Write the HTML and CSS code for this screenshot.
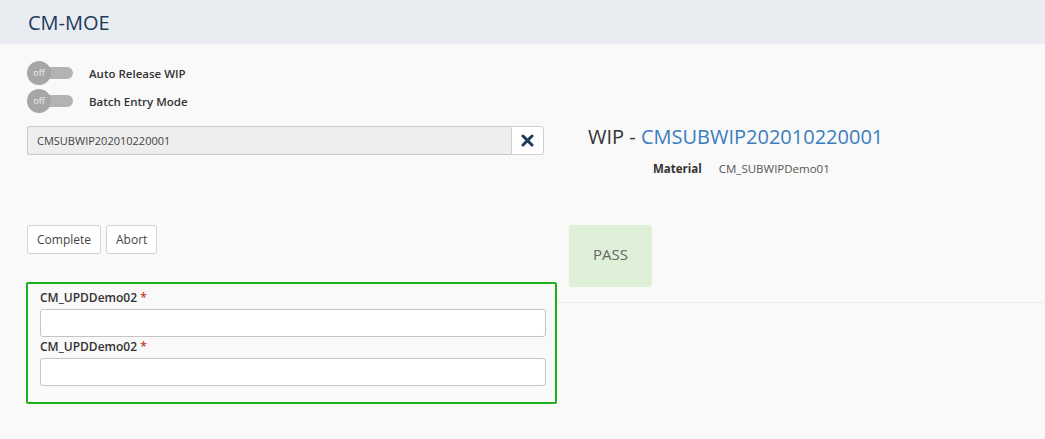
FILE: index.html
```html
<!DOCTYPE html>
<html>
<head>
<meta charset="utf-8">
<link rel="stylesheet" href="styles.css">
</head>
<body>
<header class="page-header">
  <h1 class="page-title">CM-MOE</h1>
</header>
<main class="content">
  <section class="left-col">
    <div class="toggles">
      <div class="toggle-row">
        <span class="switch"><span class="knob">off</span></span>
        <span class="toggle-label">Auto Release WIP</span>
      </div>
      <div class="toggle-row">
        <span class="switch"><span class="knob">off</span></span>
        <span class="toggle-label">Batch Entry Mode</span>
      </div>
    </div>
    <div class="input-group">
      <input class="wip-input" type="text" value="CMSUBWIP202010220001" readonly>
      <button class="clear-btn" type="button" aria-label="Clear">
        <svg width="13" height="13" viewBox="0 0 13 13"><path d="M2 2 L11 11 M11 2 L2 11" stroke="#1f3a5c" stroke-width="3" stroke-linecap="round"/></svg>
      </button>
    </div>
    <div class="actions">
      <button class="btn" type="button">Complete</button>
      <button class="btn" type="button">Abort</button>
    </div>
    <div class="data-box">
      <label class="field-label">CM_UPDDemo02 <span class="req">*</span></label>
      <input class="field-input" type="text">
      <label class="field-label">CM_UPDDemo02 <span class="req">*</span></label>
      <input class="field-input" type="text">
    </div>
  </section>
  <section class="right-col">
    <div class="wip-panel">
      <h2 class="wip-title">WIP - <span class="wip-id">CMSUBWIP202010220001</span></h2>
      <div class="meta"><span class="meta-key">Material</span><span class="meta-val">CM_SUBWIPDemo01</span></div>
      <div class="pass">PASS</div>
    </div>
  </section>
</main>
</body>
</html>
```

FILE: styles.css
```css
* { box-sizing: border-box; }
html, body { margin: 0; padding: 0; }
body {
  font-family: "Open Sans", "Liberation Sans", sans-serif;
  background: #f9f9f9;
  color: #333;
  width: 1045px;
  height: 439px;
  overflow: hidden;
}
.page-header {
  height: 44px;
  background: #e9ecf1;
  padding: 0 28px;
  display: flex;
  align-items: center;
}
.page-title {
  margin: 0;
  font-size: 20px;
  font-weight: 400;
  color: #1d3b5a;
}
.content {
  display: grid;
  grid-template-columns: 531px 1fr;
  padding-left: 26px;
}
.left-col { display: flex; flex-direction: column; }
.toggles { padding-top: 17px; display: flex; flex-direction: column; gap: 4px; }
.toggle-row { display: flex; align-items: center; height: 24px; }
.switch {
  position: relative;
  width: 48px;
  height: 24px;
  display: inline-block;
}
.switch::before {
  content: "";
  position: absolute;
  left: 8px;
  right: 1px;
  top: 6px;
  height: 12px;
  border-radius: 6px;
  background: #b3b3b3;
}
.knob {
  position: absolute;
  left: 1px;
  top: 0;
  width: 24px;
  height: 24px;
  border-radius: 50%;
  background: #a6a6a6;
  color: #f2f2f2;
  font-size: 9px;
  line-height: 24px;
  text-align: center;
}
.toggle-label {
  margin-left: 15px;
  font-size: 11.5px;
  font-weight: 600;
  color: #333;
}
.input-group {
  margin-top: 13px;
  margin-left: 1px;
  width: 517px;
  height: 29px;
  display: flex;
}
.wip-input {
  flex: 1;
  height: 29px;
  border: 1px solid #c8c8c8;
  border-right: none;
  border-radius: 3px 0 0 3px;
  background: #eeeeee;
  font-family: "Open Sans", "Liberation Sans", sans-serif;
  font-size: 11px;
  color: #444;
  padding: 0 9px;
  outline: none;
}
.clear-btn {
  width: 33px;
  height: 29px;
  border: 1px solid #cfcfcf;
  border-radius: 0 3px 3px 0;
  background: #fff;
  display: flex;
  align-items: center;
  justify-content: center;
  padding: 0;
}
.actions {
  margin-top: 70px;
  margin-left: 1px;
  display: flex;
  gap: 5px;
}
.btn {
  height: 29px;
  padding: 0 9px;
  border: 1px solid #d2d2d2;
  border-radius: 3px;
  background: #fff;
  font-family: "Open Sans", "Liberation Sans", sans-serif;
  font-size: 12px;
  color: #444;
}
.data-box {
  margin-top: 28px;
  width: 531px;
  border: 2px solid #1fae1f;
  border-radius: 2px;
  padding: 5px 9px 15px 12px;
  display: flex;
  flex-direction: column;
}
.field-label {
  font-size: 12px;
  font-weight: 600;
  color: #333;
  line-height: 18px;
  margin-bottom: 2px;
}
.req { color: #c0392b; }
.field-input {
  height: 28px;
  border: 1px solid #c4c4c4;
  border-radius: 3px;
  background: #fff;
  margin-bottom: 1px;
  outline: none;
}
.right-col { padding-left: 0; }
.wip-panel {
  height: 259px;
  border-bottom: 1px solid #ececec;
  padding-top: 80px;
}
.wip-title {
  margin: 0 0 0 31px;
  font-size: 20px;
  font-weight: 400;
  color: #333;
  line-height: 26px;
}
.wip-id { color: #3a7dbf; }
.meta {
  margin-top: 11px;
  margin-left: 96px;
  font-size: 11.5px;
  display: flex;
  gap: 17px;
}
.meta-key { font-weight: 700; color: #333; }
.meta-val { color: #555; }
.pass {
  margin-top: 49px;
  margin-left: 12px;
  width: 83px;
  height: 62px;
  border-radius: 4px;
  background: #dff0d8;
  color: #666;
  font-size: 15px;
  display: flex;
  align-items: center;
  justify-content: center;
  padding-bottom: 4px;
}
```
